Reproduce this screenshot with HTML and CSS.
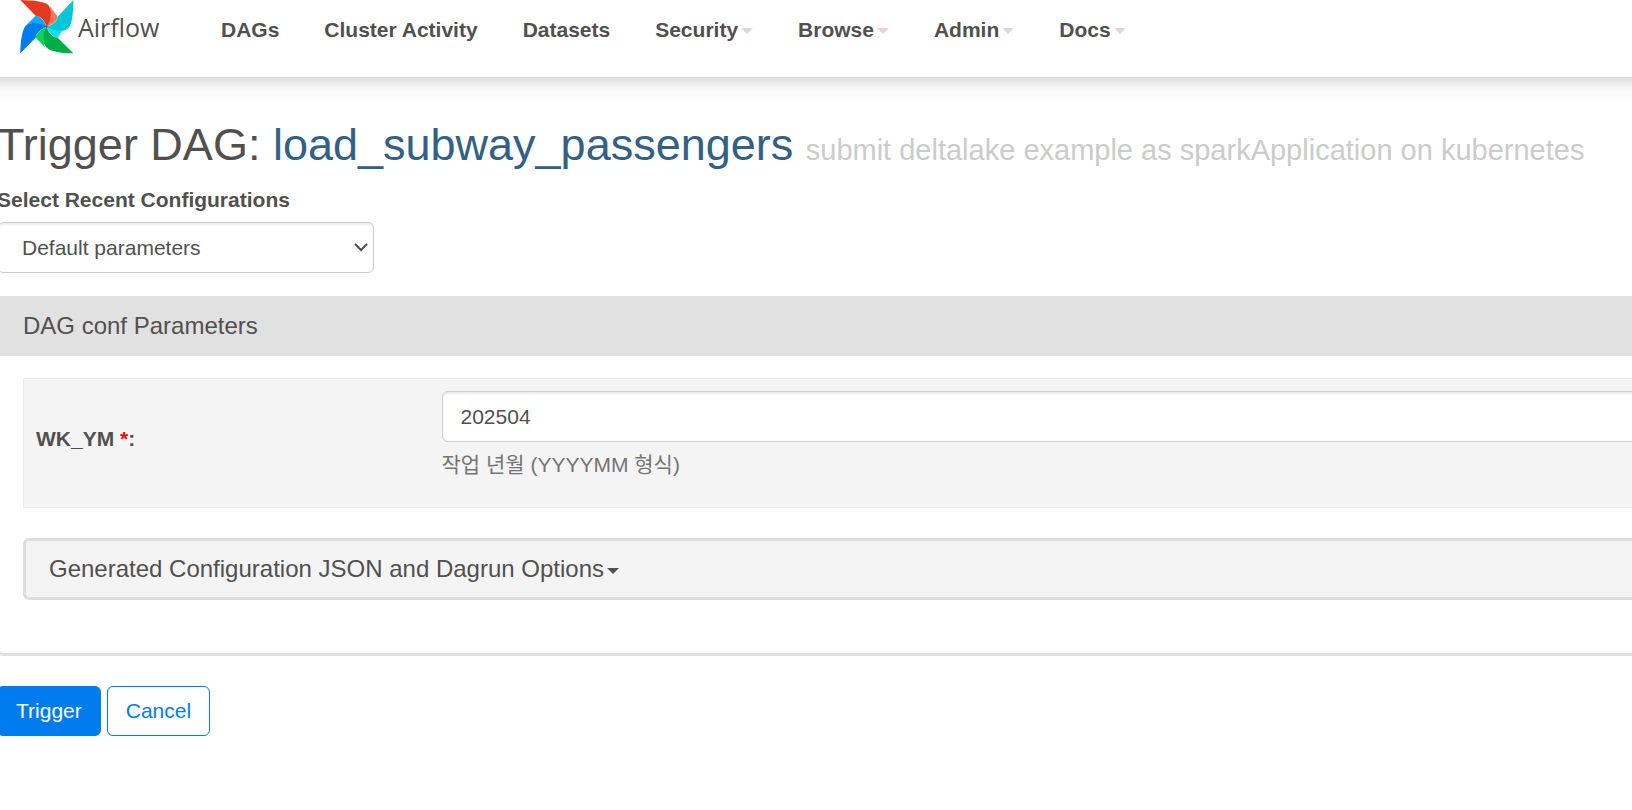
FILE: index.html
```html
<!DOCTYPE html>
<html lang="en">
<head>
    <meta charset="UTF-8">
    <meta name="viewport" content="width=device-width, initial-scale=1.0">
    <title>Trigger DAG - Airflow</title>
    <link rel="stylesheet" href="styles.css">
</head>
<body>
    <nav class="navbar">
        <a class="brand" href="#">
            <svg class="brand-logo" viewBox="0 0 162 162" aria-hidden="true">
                <path fill="#ff7557" d="M80 80C90 68 93 40 89 18L113 50C110 65 96 74 80 80z"/>
                <path fill="#11e1ee" d="M80 80C92 90 112 94 130 88L113 113C98 111 88 98 80 80z"/>
                <path fill="#04d659" d="M80 80C70 92 67 122 75 142L47 113C50 98 64 88 80 80z"/>
                <path fill="#00acff" d="M80 80C68 68 40 65 20 74L47 47C62 49 73 62 80 80z"/>
                <path fill="#e33921" d="M1 0C40 1 73 5 84 14C97 27 95 62 80 80C74 62 64 49 47 47z"/>
                <path fill="#00c7d9" d="M160 0C160 42 155 75 146 84C133 97 98 95 80 80C98 74 111 65 113 50z"/>
                <path fill="#00ad46" d="M160 160C120 159 92 154 80 143C64 126 68 95 80 80C86 98 96 111 113 113z"/>
                <path fill="#017cee" d="M1 160C1 120 8 87 17 77C32 64 65 66 80 80C62 88 49 98 47 113z"/>
                <circle fill="#51504f" cx="80" cy="80" r="3"/>
            </svg>
            <span>Airflow</span>
        </a>
        <ul class="nav-list">
            <li><a href="#">DAGs</a></li>
            <li><a href="#">Cluster Activity</a></li>
            <li><a href="#">Datasets</a></li>
            <li><a href="#">Security<b class="caret"></b></a></li>
            <li><a href="#">Browse<b class="caret"></b></a></li>
            <li><a href="#">Admin<b class="caret"></b></a></li>
            <li><a href="#">Docs<b class="caret"></b></a></li>
        </ul>
    </nav>

    <main class="container">
        <h1>Trigger DAG: <a href="#">load_subway_passengers</a> <small>submit deltalake example as sparkApplication on kubernetes</small></h1>
        <form>
            <label class="recent-label" for="recent_configs">Select Recent Configurations</label>
            <div class="select-wrap">
                <select class="form-control" id="recent_configs">
                    <option>Default parameters</option>
                </select>
                <svg class="select-arrow" viewBox="0 0 14 10" aria-hidden="true">
                    <path d="M1 2l6 6 6-6" fill="none" stroke="#51504f" stroke-width="2"/>
                </svg>
            </div>

            <section class="panel">
                <h2 class="panel-heading">DAG conf Parameters</h2>
                <div class="panel-body">
                    <table class="params">
                        <tr>
                            <td class="param-name"><label for="wk_ym">WK_YM <span class="required">*</span>:</label></td>
                            <td>
                                <input class="form-control" type="text" id="wk_ym" value="202504" required>
                                <span class="help-block" lang="ko">작업 년월 (YYYYMM 형식)</span>
                            </td>
                        </tr>
                    </table>
                    <button type="button" class="accordion">Generated Configuration JSON and Dagrun Options<b class="caret"></b></button>
                </div>
            </section>

            <div class="actions">
                <button type="button" class="btn btn-primary">Trigger</button>
                <a class="btn" href="#">Cancel</a>
            </div>
        </form>
    </main>
</body>
</html>
```
FILE: styles.css
```css
* {
    box-sizing: border-box;
}
body {
    margin: 0;
    background-color: #fff;
    color: #51504f;
    font-family: "Liberation Sans", Arial, "Noto Sans CJK KR", sans-serif;
    font-size: 21px;
    line-height: 30px;
    overflow-x: hidden;
}
a {
    color: #326086;
    text-decoration: none;
}

/* top bar */
.navbar {
    display: flex;
    align-items: flex-start;
    height: 77px;
    margin: 0 -60px;
    padding-left: 80px;
    background-color: #fff;
    box-shadow: 0 3px 12px rgba(0, 0, 0, 0.12), 0 6px 24px rgba(0, 0, 0, 0.08);
}
.brand {
    display: flex;
    gap: 4px;
    width: 179px;
    color: #51504f;
    font-family: "Open Sans", "Noto Sans", sans-serif;
    font-size: 25px;
    line-height: 54px;
}
.brand-logo {
    width: 54px;
    height: 54px;
}
.nav-list {
    display: flex;
    gap: 1px;
    margin: 0;
    padding: 0;
    list-style: none;
}
.nav-list a {
    display: block;
    padding: 15px 22px;
    color: #51504f;
    font-weight: bold;
    white-space: nowrap;
}
.caret {
    display: inline-block;
    margin-left: 3px;
    border-top: 6px solid;
    border-left: 6px solid transparent;
    border-right: 6px solid transparent;
    vertical-align: middle;
}
.nav-list .caret {
    border-top-color: #e2d2e2;
}

/* the fluid container bleeds past both window edges */
.container {
    margin: 0 -60px 0 -3px;
    padding-top: 43px;
}
h1 {
    margin: 0 0 10px;
    font-size: 45px;
    font-weight: normal;
    line-height: 50px;
    white-space: nowrap;
}
h1 small {
    color: #cbcbcb;
    font-size: 29px;
}
.recent-label {
    display: block;
    margin-bottom: 7px;
    font-weight: bold;
}
.form-control {
    display: block;
    width: 100%;
    height: 51px;
    padding: 9px 18px;
    border: 1px solid #ccc;
    border-radius: 6px;
    background-color: #fff;
    box-shadow: inset 0 2px 2px rgba(0, 0, 0, 0.08);
    color: #51504f;
    font: inherit;
}
.select-wrap {
    position: relative;
    width: 377px;
    margin-bottom: 23px;
}
.select-wrap select {
    padding-left: 24px;
    appearance: none;
}
.select-arrow {
    position: absolute;
    top: 20px;
    right: 6px;
    width: 14px;
    height: 10px;
    pointer-events: none;
}

.panel {
    border: 3px solid #e1e1e1;
    border-top: 0;
    border-radius: 6px;
}
.panel-heading {
    margin: 0;
    padding: 15px 23px;
    background-color: #e1e1e1;
    font-size: 24px;
    font-weight: normal;
}
.panel-body {
    padding: 22px 23px 53px;
}
.params {
    width: 100%;
    height: 130px;
    margin-bottom: 30px;
    border: 1px solid #ebebeb;
    border-collapse: collapse;
    background-color: #f4f4f4;
}
.params td {
    padding: 12px;
    vertical-align: top;
}
.params .param-name {
    width: 406px;
    font-weight: bold;
    vertical-align: middle;
}
.param-name label {
    display: block;
    margin-bottom: 8px;
}
.required {
    color: #f00;
}
.help-block {
    display: block;
    margin-top: 8px;
    color: #757473;
}
.accordion {
    display: block;
    width: 100%;
    padding: 13px 23px;
    border: 3px solid #ddd;
    border-radius: 6px;
    background-color: #f4f4f4;
    color: #51504f;
    font: inherit;
    font-size: 24px;
    text-align: left;
}

.actions {
    display: flex;
    gap: 6px;
    margin-top: 30px;
}
.btn {
    padding: 9px 18px;
    border: 1px solid #017cee;
    border-radius: 6px;
    background-color: #fff;
    color: #017cee;
    font: inherit;
}
.btn-primary {
    background-color: #017cee;
    color: #fff;
}
```
